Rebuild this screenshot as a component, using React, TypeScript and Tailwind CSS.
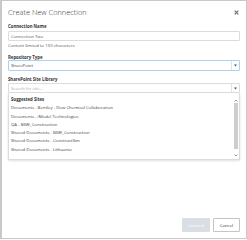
import React from "react";

const items = [
  "Documents - Bentley - Dow Chemical Collaboration",
  "Documents - iModel Technologies",
  "QA - BSW_Construction",
  "Shared Documents - BSW_Construction",
  "Shared Documents - ConstructSim",
  "Shared Documents - Lithuania",
];

function Caret() {
  return (
    <div className="flex h-full w-[8px] items-center justify-center border-l border-[#e2e2e2]">
      <svg width="3" height="3" viewBox="0 0 3 3">
        <path d="M0 0.5 H3 L1.5 2.5 Z" fill="#555" />
      </svg>
    </div>
  );
}

export default function App() {
  return (
    <div className="h-[240px] w-[247px] bg-white [font-family:'Open_Sans',sans-serif] text-[#333]">
      <div className="flex h-[239px] w-[247px] flex-col border border-l-2 border-[#c9c9c9] px-[6px]">
        <div className="mt-[6px] flex h-[10px] items-center justify-between">
          <div className="text-[7.4px] font-light leading-[10px] text-[#333]">Create New Connection</div>
          <svg width="5" height="5" viewBox="0 0 5 5" className="mr-[1px] mt-[1px]">
            <path d="M0.7 0.7 L4.3 4.3 M4.3 0.7 L0.7 4.3" stroke="#6d6d6d" strokeWidth="1.2" />
          </svg>
        </div>

        <div className="mt-[6px] text-[4.3px] font-bold leading-[6px]">Connection Name</div>
        <div className="mt-[2px] flex h-[10px] items-center rounded-[1px] border border-[#dcdcdc] px-[2px] text-[4.3px] text-[#555]">
          Connection Two
        </div>
        <div className="mt-[1px] text-[4.3px] leading-[6px] text-[#555]">Content limited to 150 characters</div>

        <div className="mt-[6px] text-[4.3px] font-bold leading-[6px]">Repository Type</div>
        <div className="flex h-[11px] items-center rounded-[1px] border border-[#a9d2f2] text-[4.3px] text-[#444]">
          <div className="flex-1 px-[2px]">SharePoint</div>
          <Caret />
        </div>

        <div className="mt-[5px] text-[4.3px] font-bold leading-[6px]">SharePoint Site Library</div>
        <div className="mt-[1px] flex h-[10px] items-center rounded-[1px] border border-[#dcdcdc] text-[4.3px] text-[#aaa]">
          <div className="flex-1 px-[2px]">Search for site...</div>
          <Caret />
        </div>
        <div className="flex h-[67px] overflow-hidden border border-t-0 border-[#dcdcdc] shadow-[0_1px_2px_rgba(0,0,0,0.12)]">
          <div className="flex-1 pl-[2px] pt-[2px] text-[4.3px] text-[#444]">
            <div className="h-[8.3px] font-bold leading-[8.3px] text-[#333]">Suggested Sites</div>
            {items.map((t) => (
              <div key={t} className="h-[8.3px] whitespace-nowrap leading-[8.3px]">
                {t}
              </div>
            ))}
          </div>
          <div className="mr-[1px] mt-[6px] flex w-[5px] flex-col items-center">
            <svg width="4" height="3" viewBox="0 0 4 3" className="mb-[1px]">
              <path d="M0.5 2.5 L2 1 L3.5 2.5" stroke="#888" strokeWidth="0.8" fill="none" />
            </svg>
            <div className="h-[46px] w-[4px] bg-[#cdcdcd]" />
            <svg width="4" height="3" viewBox="0 0 4 3" className="mt-[5px]">
              <path d="M0.5 0.5 L2 2 L3.5 0.5" stroke="#888" strokeWidth="0.8" fill="none" />
            </svg>
          </div>
        </div>

        <div className="flex-1" />
        <div className="mb-[6px] flex justify-end gap-[3px]">
          <div className="flex h-[14px] w-[28px] items-center justify-center rounded-[1px] bg-[#d9dee4] text-[4.3px] text-white">
            Connect
          </div>
          <div className="flex h-[14px] w-[27px] items-center justify-center rounded-[1px] border border-[#c4c4c4] bg-white text-[4.3px] text-[#333]">
            Cancel
          </div>
        </div>
      </div>
    </div>
  );
}
